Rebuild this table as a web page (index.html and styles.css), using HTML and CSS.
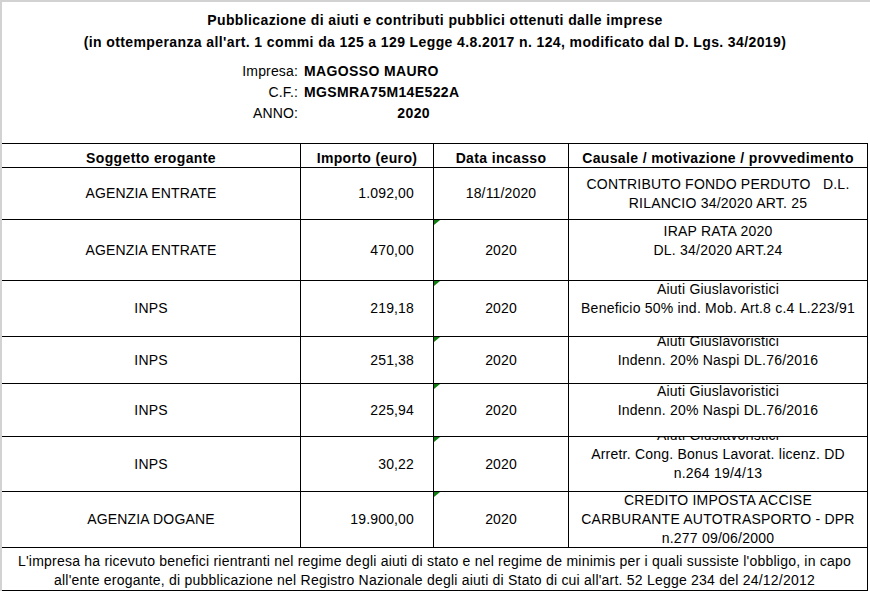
FILE: index.html
```html
<!DOCTYPE html>
<html lang="it">
<head>
<meta charset="utf-8">
<title>Pubblicazione di aiuti e contributi pubblici</title>
<link rel="stylesheet" href="styles.css">
</head>
<body>
<div class="sheet">
  <div class="page">
    <div class="title">
      <div>Pubblicazione di aiuti e contributi pubblici ottenuti dalle imprese</div>
      <div>(in ottemperanza all'art. 1 commi da 125 a 129 Legge 4.8.2017 n. 124, modificato dal D. Lgs. 34/2019)</div>
    </div>

    <div class="info">
      <div class="info-label">Impresa:</div><div class="info-value">MAGOSSO MAURO</div><div></div>
      <div class="info-label">C.F.:</div><div class="info-value">MGSMRA75M14E522A</div><div></div>
      <div class="info-label">ANNO:</div><div class="info-value num">2020</div><div></div>
    </div>

    <div class="grid">
      <div class="cell head">Soggetto erogante</div>
      <div class="cell head">Importo (euro)</div>
      <div class="cell head">Data incasso</div>
      <div class="cell head">Causale / motivazione / provvedimento</div>

      <div class="cell c-center">AGENZIA ENTRATE</div>
      <div class="cell c-num">1.092,00</div>
      <div class="cell c-center">18/11/2020</div>
      <div class="cell c-text"><div>CONTRIBUTO FONDO PERDUTO &nbsp; D.L.<br>RILANCIO 34/2020 ART. 25</div></div>

      <div class="cell c-center">AGENZIA ENTRATE</div>
      <div class="cell c-num">470,00</div>
      <div class="cell c-center flag">2020</div>
      <div class="cell c-text"><div>IRAP RATA 2020<br>DL. 34/2020 ART.24<br>&nbsp;</div></div>

      <div class="cell c-center">INPS</div>
      <div class="cell c-num">219,18</div>
      <div class="cell c-center flag">2020</div>
      <div class="cell c-text"><div>Aiuti Giuslavoristici<br>Beneficio 50% ind. Mob. Art.8 c.4 L.223/91<br>&nbsp;</div></div>

      <div class="cell c-center">INPS</div>
      <div class="cell c-num">251,38</div>
      <div class="cell c-center flag">2020</div>
      <div class="cell c-text"><div>Aiuti Giuslavoristici<br>Indenn. 20% Naspi DL.76/2016<br>&nbsp;</div></div>

      <div class="cell c-center">INPS</div>
      <div class="cell c-num">225,94</div>
      <div class="cell c-center flag">2020</div>
      <div class="cell c-text"><div>Aiuti Giuslavoristici<br>Indenn. 20% Naspi DL.76/2016<br>&nbsp;</div></div>

      <div class="cell c-center">INPS</div>
      <div class="cell c-num">30,22</div>
      <div class="cell c-center flag">2020</div>
      <div class="cell c-text"><div>Aiuti Giuslavoristici<br>Arretr. Cong. Bonus Lavorat. licenz. DD<br>n.264 19/4/13<br>&nbsp;</div></div>

      <div class="cell c-center">AGENZIA DOGANE</div>
      <div class="cell c-num">19.900,00</div>
      <div class="cell c-center flag">2020</div>
      <div class="cell c-text"><div>CREDITO IMPOSTA ACCISE<br>CARBURANTE AUTOTRASPORTO - DPR<br>n.277 09/06/2000</div></div>

      <div class="cell foot"><div>L'impresa ha ricevuto benefici rientranti nel regime degli aiuti di stato e nel regime de minimis per i quali sussiste l'obbligo, in capo<br>all'ente erogante, di pubblicazione nel Registro Nazionale degli aiuti di Stato di cui all'art. 52 Legge 234 del 24/12/2012</div></div>
    </div>
  </div>
</div>
</body>
</html>
```

FILE: styles.css
```css
html, body {
  margin: 0;
  padding: 0;
  background: #ffffff;
}

.sheet {
  width: 870px;
  height: 591px;
  box-sizing: border-box;
  border-top: 2px solid #d2d2d2;
  border-left: 2px solid #d2d2d2;
  overflow: hidden;
  font-family: "Liberation Sans", Arial, sans-serif;
  font-size: 14px;
  letter-spacing: 0.15px;
  color: #000;
}

.page {
  width: 866px;
}

.title {
  padding-top: 7px;
  text-align: center;
  font-weight: bold;
  letter-spacing: 0.39px;
  line-height: 22px;
  white-space: nowrap;
}

.info {
  margin-top: 8px;
  display: grid;
  grid-template-columns: 298px 133px 1fr;
  grid-auto-rows: 21px;
  line-height: 21px;
  white-space: nowrap;
}

.info-label {
  text-align: right;
  padding-right: 2px;
}

.info-value {
  font-weight: bold;
  letter-spacing: 0.38px;
  padding-left: 4px;
}

.info-value.num {
  text-align: right;
  padding-left: 0;
  padding-right: 3px;
}

.grid {
  margin-top: 19px;
  display: grid;
  grid-template-columns: 299px 133px 135px 299px;
  grid-template-rows: 24px 52px 61px 56px 47px 53px 55px 56px 43px;
  border-top: 1px solid #000;
}

.cell {
  position: relative;
  box-sizing: border-box;
  border-right: 1px solid #000;
  border-bottom: 1px solid #000;
  display: flex;
  align-items: center;
  overflow: hidden;
  line-height: 19px;
  white-space: nowrap;
}

.head {
  font-weight: bold;
  letter-spacing: 0.36px;
  justify-content: center;
  align-items: flex-end;
  line-height: 17px;
}

.c-center {
  justify-content: center;
}

.c-num {
  justify-content: flex-end;
  padding-right: 19px;
}

.c-text {
  justify-content: center;
  text-align: center;
  letter-spacing: 0.22px;
}

.flag::before {
  content: "";
  position: absolute;
  left: 0;
  top: 0;
  width: 6px;
  height: 5px;
  background: #0f7d0f;
  clip-path: polygon(0 0, 100% 0, 0 100%);
}

.foot {
  grid-column: 1 / 5;
  justify-content: center;
  align-items: flex-end;
  text-align: center;
  letter-spacing: 0.22px;
}
```
